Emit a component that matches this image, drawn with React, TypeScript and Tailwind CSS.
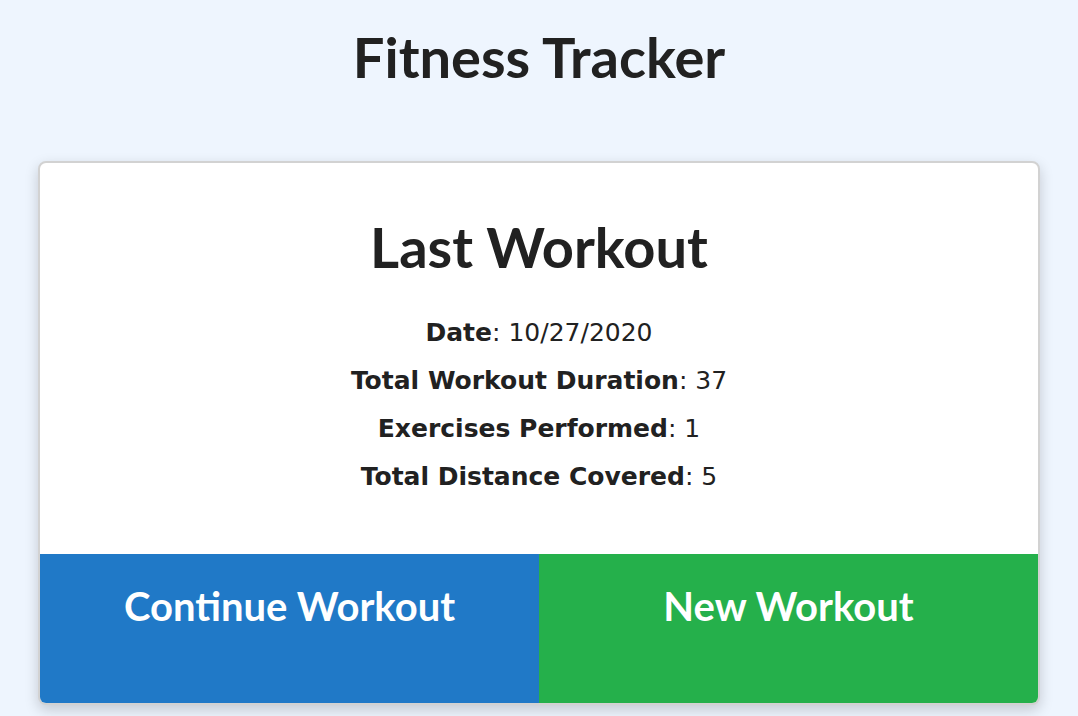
export default function App() {
  const stats = [
    { label: "Date", value: "10/27/2020" },
    { label: "Total Workout Duration", value: "37" },
    { label: "Exercises Performed", value: "1" },
    { label: "Total Distance Covered", value: "5" },
  ];

  return (
    <div className="min-h-[716px] bg-[#eef5fe] pt-[23px] text-[#212121] font-['Lato',sans-serif]">
      <h1 className="text-center text-[56px] font-bold leading-[1.2]">Fitness Tracker</h1>
      <div className="mx-[38px] mt-[71px] rounded-lg border-2 border-[#d2d2d2] bg-white shadow-[0_5px_14px_rgba(0,0,0,0.18)] overflow-hidden">
        <h2 className="pt-[50px] text-center text-[56px] font-bold leading-[1.2]">Last Workout</h2>
        <div className="mt-[29px] pb-[53px] flex flex-col items-center font-['DejaVu_Sans',sans-serif] text-[25px] leading-[48px]">
          {stats.map((s) => (
            <p key={s.label}>
              <strong>{s.label}</strong>: {s.value}
            </p>
          ))}
        </div>
        <div className="grid grid-cols-2 h-[149px] text-white text-[40px] font-bold leading-[1.2]">
          <button className="bg-[#2079c7] flex justify-center items-start pt-[28px]">Continue Workout</button>
          <button className="bg-[#25b04b] flex justify-center items-start pt-[28px]">New Workout</button>
        </div>
      </div>
    </div>
  );
}
